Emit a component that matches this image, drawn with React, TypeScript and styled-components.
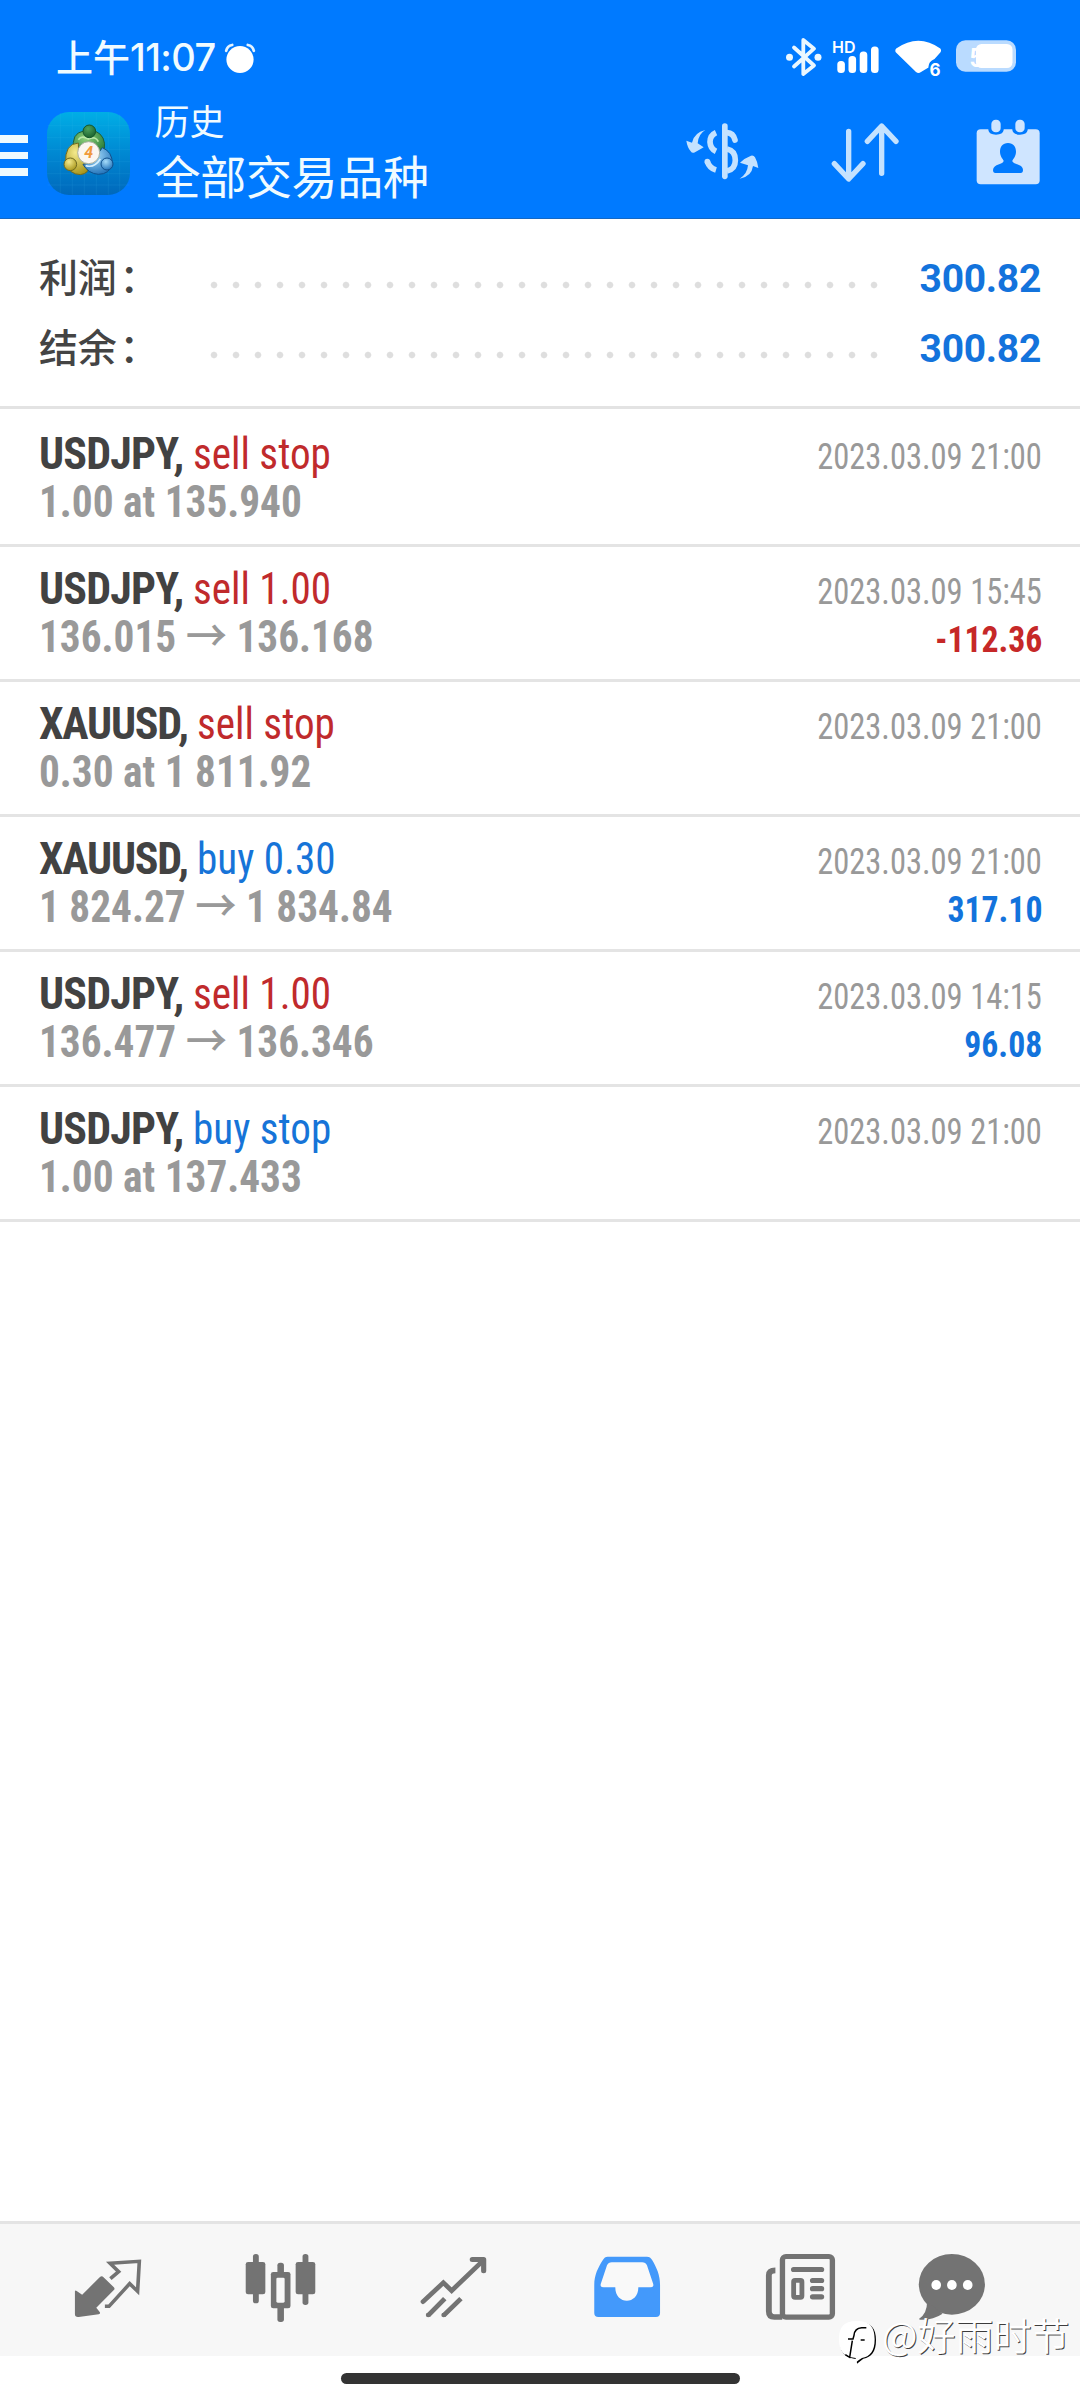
import React from 'react';
import styled, { createGlobalStyle } from 'styled-components';

const BLUE = '#007aff';
const CJK = "'Noto Sans CJK SC', sans-serif";

const GlobalStyle = createGlobalStyle`
  body { margin: 0; background: #fff; }
  svg { display: block; flex: none; }
`;

const Screen = styled.div`
  position: relative;
  width: 1080px;
  height: 2400px;
  display: flex;
  flex-direction: column;
  overflow: hidden;
  background: #fff;
  font-family: Roboto, ${CJK};
`;

/* ---------- header ---------- */

const Header = styled.header`
  height: 218px;
  background: ${BLUE};
  border-bottom: 1px solid #1468c4;
  color: #f0fbff;
`;

const StatusBar = styled.div`
  display: flex;
  align-items: flex-start;
  justify-content: space-between;
  height: 60px;
  padding: 34px 64px 0 56px;
`;

const StatusGroup = styled.div`
  display: flex;
  align-items: flex-start;
`;

const Clock = styled.span`
  font: 450 37px/46px ${CJK};
  margin-top: -1px;
  display: flex;
`;

const ClockDigits = styled.span`
  font: 500 38px/46px Inter, sans-serif;
  letter-spacing: -0.6px;
  margin-top: 1px;
`;

const StatusText = styled.text<{ $size: number; $weight: number }>`
  font-family: Inter, sans-serif;
  font-size: ${p => p.$size}px;
  font-weight: ${p => p.$weight};
  fill: #fff;
`;

const Alarm = styled.svg`
  width: 34px;
  height: 34px;
  margin: 8px 0 0 7px;
`;

const Toolbar = styled.div`
  display: flex;
  align-items: flex-start;
  height: 124px;
  padding-right: 32px;
`;

const Menu = styled.div`
  display: flex;
  flex-direction: column;
  gap: 9px;
  margin: 41px 19px 0 0;
`;

const MenuBar = styled.span`
  width: 27.5px;
  height: 7.5px;
  background: #eefaff;
`;

const AppTile = styled.svg`
  width: 83px;
  height: 83px;
  margin-top: 18px;
`;

const TileDigit = styled.text`
  font: italic 700 48px Roboto, sans-serif;
  text-anchor: middle;
  fill: #f09a3c;
`;

const Titles = styled.div`
  flex: 1;
  padding-left: 25px;
  font-family: ${CJK};
`;

const Caption = styled.div`
  font-size: 35px;
  line-height: 52px;
  height: 50px;
  font-weight: 400;
`;

const Title = styled.div`
  font-size: 46px;
  line-height: 60px;
  font-weight: 400;
  letter-spacing: -0.3px;
`;

const Actions = styled.div`
  display: flex;
  margin-top: 17px;
`;

const Action = styled.svg<{ $gap?: number }>`
  height: 80px;
  margin-left: ${p => p.$gap || 0}px;
  color: #c4e2ff;
`;

/* ---------- summary ---------- */

const Summary = styled.section`
  height: 166px;
  padding: 21px 39px 0;
  border-bottom: 3px solid #e3e3e3;
`;

const SummaryRow = styled.div`
  display: grid;
  grid-template-columns: 163.5px 682px 1fr;
  align-items: baseline;
  height: 70px;
`;

const Label = styled.span`
  font: 500 39px/70px ${CJK};
  letter-spacing: -0.3px;
  color: #444;
`;

const Colon = styled.span`
  margin-left: 3px;
`;

const Leader = styled.span`
  align-self: start;
  height: 8px;
  margin-top: 41px;
  background: radial-gradient(circle at center, #dedede 2.7px, rgba(222, 222, 222, 0) 3.8px) 0 0 / 22px 8px repeat-x;
`;

const Total = styled.span`
  font-size: 39px;
  line-height: 46px;
  font-weight: 700;
  letter-spacing: -0.3px;
  text-align: right;
  color: #1373dc;
`;

/* ---------- deals ---------- */

const DealList = styled.main`
  flex: 1;
  padding-top: 3px;
`;

const Deal = styled.article`
  height: 114px;
  padding: 18px 38px 0 39px;
  border-bottom: 3px solid #e4e4e4;
  font-stretch: 75%;
`;

const Line = styled.div`
  display: flex;
  justify-content: space-between;
  align-items: baseline;
  height: 48px;
  line-height: 48px;
  font-size: 44px;
  white-space: pre;
`;

const Symbol = styled.span<{ $tracking: number }>`
  font-weight: 700;
  letter-spacing: ${p => p.$tracking}px;
  color: #424242;
`;

const Side = styled.span<{ $buy: boolean }>`
  display: inline-block;
  font-weight: 430;
  transform: scaleX(0.935);
  transform-origin: left;
  color: ${p => (p.$buy ? '#1674d8' : '#c02a2c')};
`;

const Price = styled.span`
  font-weight: 700;
  transform: scaleX(0.938);
  transform-origin: left;
  color: #999;
`;

const Arrow = styled.span`
  font-weight: 500;
`;

const Time = styled.span`
  font-size: 36px;
  line-height: 40px;
  transform: scaleX(0.903);
  transform-origin: right;
  color: #999;
`;

const Profit = styled.span<{ $loss: boolean }>`
  font-size: 36px;
  line-height: 40px;
  font-weight: 700;
  transform: scaleX(0.937);
  transform-origin: right;
  color: ${p => (p.$loss ? '#c62828' : '#1373dc')};
`;

/* ---------- bottom ---------- */

const TabBar = styled.nav`
  display: flex;
  align-items: center;
  height: 132px;
  padding-left: 21px;
  border-top: 3px solid #e4e4e4;
  background: #f7f7f7;
`;

const Tab = styled.div<{ $active?: boolean; $width?: number }>`
  display: flex;
  justify-content: center;
  width: ${p => p.$width || 173}px;
  color: ${p => (p.$active ? '#4399fb' : '#737373')};
`;

const HomeArea = styled.div`
  display: flex;
  justify-content: center;
  height: 27px;
  padding-top: 17px;
`;

const HomeBar = styled.div`
  width: 399px;
  height: 11px;
  border-radius: 6px;
  background: #333;
`;

const Watermark = styled.div`
  position: absolute;
  left: 838px;
  top: 2310px;
  display: flex;
  font: 350 38px/56px ${CJK};
  color: #fff;
  text-shadow: 1px 1px 0 rgba(0, 0, 0, 0.75);
  white-space: nowrap;
`;

const WatermarkText = styled.span`
  margin: -4px 0 0 4px;
`;

const AlarmIcon = () => (
  <Alarm viewBox="0 0 34 34">
    <circle cx="17" cy="17.5" r="13.6" fill="#fff" />
    <path d="M3.200 8.800Q4.200 4 9.200 3M30.800 8.800Q29.800 4 24.800 3" fill="none" stroke="#e4f3ff" strokeWidth="2.800" strokeLinecap="round" />
  </Alarm>
);

const StatusIcons = () => (
  <svg width="236" height="48" viewBox="780 34 236 48">
    <path d="M794 47.500L814 65.500L803.300 74V40L814 48.700L794 66.500" fill="none" stroke="#eaf7ff" strokeWidth="3.800" strokeLinejoin="round" strokeLinecap="round" />
    <circle cx="789.500" cy="57.200" r="3.500" fill="#eaf7ff" />
    <circle cx="818" cy="57.200" r="3.500" fill="#eaf7ff" />
    <StatusText x="832" y="52.700" $size={16} $weight={600}>HD</StatusText>
    <g fill="#fff">
      <rect x="837.300" y="61" width="7.600" height="12" rx="3.500" />
      <rect x="848.500" y="56" width="7.600" height="17" rx="3.500" />
      <rect x="859.700" y="51.500" width="7.600" height="21.500" rx="3.500" />
      <rect x="871" y="46.500" width="7.600" height="26.500" rx="3.500" />
      <path d="M896.200 48.500Q918.500 33 940.300 48.500Q941.800 50.500 940.300 52.500L934.500 59Q928 62 928.500 67.500L921 72Q918.500 73.800 916 72L896 52.500Q894.500 50.500 896.200 48.500Z" />
      <rect x="956" y="40.300" width="60" height="31.500" rx="9.500" fillOpacity="0.73" />
    </g>
    <StatusText x="929.500" y="75.500" $size={17} $weight={700}>6</StatusText>
    <StatusText x="969" y="66.500" $size={25} $weight={600}>5</StatusText>
    <rect x="976" y="44" width="36.500" height="24" rx="5.500" fill="#fff" />
  </svg>
);

const AppIcon = () => (
  <AppTile viewBox="18 21 249 249">
    <defs>
      <linearGradient id="tile" x1="0" y1="0" x2="0" y2="1">
        <stop offset="0" stopColor="#00aee6" />
        <stop offset="0.5" stopColor="#0088d2" />
        <stop offset="1" stopColor="#0068bb" />
      </linearGradient>
      <radialGradient id="green" cx="0.4" cy="0.3" r="0.8"><stop offset="0" stopColor="#8fd07c" /><stop offset="1" stopColor="#18702e" /></radialGradient>
      <radialGradient id="leaf" cx="0.4" cy="0.3" r="0.8"><stop offset="0" stopColor="#4fa35c" /><stop offset="1" stopColor="#145a2a" /></radialGradient>
      <radialGradient id="gold" cx="0.4" cy="0.3" r="0.8"><stop offset="0" stopColor="#f4ea8c" /><stop offset="1" stopColor="#a08d10" /></radialGradient>
      <radialGradient id="sky" cx="0.4" cy="0.3" r="0.8"><stop offset="0" stopColor="#a6dcfa" /><stop offset="1" stopColor="#1569b4" /></radialGradient>
    </defs>
    <rect x="18" y="21" width="249" height="249" rx="66" fill="url(#tile)" />
    <path d="M58 24V267M94 22V269M130 22V269M166 22V269M202 22V269M236 28V260M20 62H265M18 98H267M18 134H267M18 170H267M18 206H267M20 240H265" stroke="#4cc4f2" strokeOpacity="0.16" strokeWidth="2" />
    <g strokeWidth="3">
      <path d="M98 135Q90 84 128 78H162Q196 92 190 134Q182 160 160 150L144 118Q124 118 98 135Z" fill="url(#green)" stroke="#1c5f3c" />
      <path d="M112 104Q122 90 142 102Q164 92 172 110" fill="none" stroke="#b9e8a8" strokeWidth="5" />
      <path d="M74 176Q70 116 112 114Q108 150 146 176Q146 206 118 209Q86 208 74 176Z" fill="url(#gold)" stroke="#6f6a20" />
      <path d="M126 178Q150 180 184 128Q214 140 214 176Q206 208 172 208Q142 206 126 178Z" fill="url(#sky)" stroke="#11508c" />
      <path d="M134 182Q160 190 178 162" fill="none" stroke="#d4efff" strokeWidth="5" />
      <circle cx="145" cy="79" r="19" fill="url(#leaf)" stroke="#14572c" />
      <circle cx="88" cy="178" r="19" fill="url(#gold)" stroke="#6f6a20" />
      <circle cx="198" cy="177" r="18" fill="url(#sky)" stroke="#11508c" />
      <circle cx="143" cy="143" r="33" fill="#fbf6f0" stroke="#a9b0a0" />
    </g>
    <TileDigit x="143" y="160">4</TileDigit>
  </AppTile>
);

const CurrencyIcon = () => (
  <Action width="90" viewBox="0 3 270 240">
    <path d="M134.500 48V199" stroke="currentColor" strokeWidth="17" strokeLinecap="round" />
    <g fill="none" stroke="currentColor" strokeWidth="17">
      <path d="M108 68Q90 76 90 96Q91 116 108 124" />
      <path d="M82 154Q88 174 108 180" />
      <path d="M141 68Q160 69 165 90" strokeLinecap="round" />
      <path d="M141 117Q166 122 166 151Q166 178 141 183" />
    </g>
    <circle cx="82" cy="155" r="8.500" fill="currentColor" />
    <path d="M76 60Q55 72 53 100L71 112Q60 119 42 128Q36 130 32 124Q22 112 19 92L36 98Q42 68 76 60Z" fill="currentColor" />
    <path d="M179 206Q202 192 204 166L180 158Q194 144 213 137Q221 135 225 142Q233 156 235 174L219 168Q215 200 179 206Z" fill="currentColor" />
  </Action>
);

const SortIcon = () => (
  <Action width="80" $gap={55} viewBox="495 333 240 240">
    <path d="M566 394V536M523 491L566 537L609 491M665 520V380M622 424L665 378L708 424" fill="none" stroke="currentColor" strokeWidth="16" strokeLinecap="round" strokeLinejoin="round" />
  </Action>
);

const CalendarIcon = () => (
  <Action width="80" $gap={63} viewBox="924 333 240 240">
    <rect x="950" y="388" width="189" height="165" rx="12" fill="#cfe5ff" />
    <path d="M985 384V390Q987 404 1008 404Q1029 404 1031 390V384ZM1057 384V390Q1059 404 1080 404Q1101 404 1103 390V384Z" fill={BLUE} />
    <rect x="994" y="359" width="28" height="38" rx="13" fill="#cfe5ff" />
    <rect x="1066" y="359" width="28" height="38" rx="13" fill="#cfe5ff" />
    <path d="M1044 429C1060 429 1068 441 1068 455C1068 468 1060 476 1057 482C1057 494 1088 490 1089 510Q1089 519 1082 519H1006Q999 519 999 510C1000 490 1031 494 1031 482C1028 476 1020 468 1020 455C1020 441 1028 429 1044 429Z" fill={BLUE} />
  </Action>
);

const TabIcon = ({ x, children }: { x: number; children: React.ReactNode }) => (
  <svg width="80" height="80" viewBox={`${x} 150 232.300 240`} preserveAspectRatio="none">{children}</svg>
);

const QuotesIcon = () => (
  <TabIcon x={198.9}>
    <path d="M219 274Q220 270 224 273L240 284L291 232Q297 226 302 232L332 262Q336 266 332 270L281 323L291 336Q294 341 288 343L230 351Q219 352 219 343Z" fill="currentColor" />
    <path d="M322 236L346 215L321 190L406 184L401 274L378 251L318 319H306" fill="none" stroke="currentColor" strokeWidth="10.500" />
  </TabIcon>
);

const ChartIcon = () => (
  <TabIcon x={701.3}>
    <g fill="currentColor">
      <rect x="736" y="162" width="17" height="148" rx="8" />
      <rect x="715" y="186" width="57" height="97" rx="7" />
      <rect x="880" y="162" width="17" height="153" rx="8" />
      <rect x="860" y="186" width="57" height="97" rx="7" />
      <rect x="807" y="188" width="19" height="178" rx="8" />
      <rect x="788" y="216" width="57" height="109" rx="7" />
    </g>
    <rect x="804" y="233" width="24" height="75" rx="4" fill="#f7f7f7" />
  </TabIcon>
);

const TradeIcon = () => (
  <TabIcon x={1203.7}>
    <g fill="none" stroke="currentColor" strokeWidth="14">
      <path d="M1230 305L1289 248L1313 272L1402 184" strokeLinecap="round" />
      <path d="M1373 178.500H1406V212" strokeWidth="15" strokeLinecap="round" strokeLinejoin="round" />
      <path d="M1245 346L1293 296M1290 346L1340 296" />
    </g>
    <circle cx="1245" cy="345" r="7" fill="currentColor" />
    <circle cx="1290" cy="345" r="7" fill="currentColor" />
  </TabIcon>
);

const HistoryIcon = () => (
  <TabIcon x={137.9}>
    <path d="M198 170H312Q322 170 327 180C340 203 350 225 350 255V339Q350 351 338 351H171Q159 351 159 339V255C159 225 170 203 184 180Q189 170 198 170Z" fill="currentColor" />
    <path d="M210 187H298Q308 187 312 196L330 251Q333 262 322 262H287C287 316 220 316 220 262H186Q175 262 178 251L196 196Q200 187 210 187Z" fill="#f9f9f9" />
  </TabIcon>
);

const NewsIcon = () => (
  <TabIcon x={640.3}>
    <g fill="none" stroke="currentColor">
      <rect x="705.500" y="169.500" width="145" height="182" rx="10" strokeWidth="15.500" />
      <path d="M685 211Q666 211 666 226V334Q666 351 682 351H705" strokeWidth="17" />
      <rect x="738" y="241" width="24" height="51" rx="4" strokeWidth="14" />
      <path d="M738 208.500H819M793 241.500H819M793 266H819M793 290.500H819" strokeWidth="15.500" strokeLinecap="round" />
    </g>
  </TabIcon>
);

const ChatIcon = () => (
  <TabIcon x={1083.2}>
    <ellipse cx="1199" cy="253" rx="96" ry="91" fill="currentColor" />
    <path d="M1127 305Q1127 340 1104 356Q1103 359 1108 359Q1145 360 1172 341Z" fill="currentColor" />
    <g fill="#fff">
      <ellipse cx="1153.500" cy="255" rx="14" ry="15" />
      <ellipse cx="1199" cy="255" rx="14" ry="15" />
      <ellipse cx="1245" cy="255" rx="14" ry="15" />
    </g>
  </TabIcon>
);

const WatermarkLogo = () => (
  <svg width="40" height="56" viewBox="24 0 120 168">
    <path d="M83 36C124 36 138 56 138 90C138 126 124 142 100 146Q94 150 81 161L80 147C40 144 30 122 30 90C30 54 44 36 83 36Z" fill="#000" />
    <path d="M80 33C122 33 134 54 134 88C134 124 120 140 96 144Q88 148 79 156L77 144C38 141 27 120 27 88C27 52 40 33 80 33Z" fill="#fff" />
    <path d="M109 53H95Q74 54 72 76L69 87H54M92 90H104M67 92L59 142L46 134" fill="none" stroke="#000" strokeWidth="4.500" />
  </svg>
);

type DealData = { symbol: string; side: string; from: string; to?: string; time: string; profit?: string };

const deals: DealData[] = [
  { symbol: 'USDJPY', side: 'sell stop', from: '1.00 at 135.940', time: '2023.03.09 21:00' },
  { symbol: 'USDJPY', side: 'sell 1.00', from: '136.015', to: '136.168', time: '2023.03.09 15:45', profit: '-112.36' },
  { symbol: 'XAUUSD', side: 'sell stop', from: '0.30 at 1 811.92', time: '2023.03.09 21:00' },
  { symbol: 'XAUUSD', side: 'buy 0.30', from: '1 824.27', to: '1 834.84', time: '2023.03.09 21:00', profit: '317.10' },
  { symbol: 'USDJPY', side: 'sell 1.00', from: '136.477', to: '136.346', time: '2023.03.09 14:15', profit: '96.08' },
  { symbol: 'USDJPY', side: 'buy stop', from: '1.00 at 137.433', time: '2023.03.09 21:00' },
];

const tracking: Record<string, number> = { USDJPY: -0.8, XAUUSD: -1.25 };

const totals = [
  { label: '利润', value: '300.82' },
  { label: '结余', value: '300.82' },
];

const App = () => (
  <Screen>
    <GlobalStyle />
    <Header>
      <StatusBar>
        <StatusGroup>
          <Clock>上午<ClockDigits>11:07</ClockDigits></Clock>
          <AlarmIcon />
        </StatusGroup>
        <StatusIcons />
      </StatusBar>
      <Toolbar>
        <Menu><MenuBar /><MenuBar /><MenuBar /></Menu>
        <AppIcon />
        <Titles>
          <Caption>历史</Caption>
          <Title>全部交易品种</Title>
        </Titles>
        <Actions>
          <CurrencyIcon />
          <SortIcon />
          <CalendarIcon />
        </Actions>
      </Toolbar>
    </Header>
    <Summary>
      {totals.map(t => (
        <SummaryRow key={t.label}>
          <Label>{t.label}<Colon>：</Colon></Label>
          <Leader />
          <Total>{t.value}</Total>
        </SummaryRow>
      ))}
    </Summary>
    <DealList>
      {deals.map((d, i) => (
        <Deal key={i}>
          <Line>
            <span>
              <Symbol $tracking={tracking[d.symbol]}>{d.symbol}, </Symbol>
              <Side $buy={d.side.startsWith('buy')}>{d.side}</Side>
            </span>
            <Time>{d.time}</Time>
          </Line>
          <Line>
            <Price>{d.from}{d.to && <> <Arrow>→</Arrow> {d.to}</>}</Price>
            {d.profit && <Profit $loss={d.profit.startsWith('-')}>{d.profit}</Profit>}
          </Line>
        </Deal>
      ))}
    </DealList>
    <TabBar>
      <Tab><QuotesIcon /></Tab>
      <Tab><ChartIcon /></Tab>
      <Tab><TradeIcon /></Tab>
      <Tab $active><HistoryIcon /></Tab>
      <Tab><NewsIcon /></Tab>
      <Tab $width={132}><ChatIcon /></Tab>
    </TabBar>
    <HomeArea><HomeBar /></HomeArea>
    <Watermark><WatermarkLogo /><WatermarkText>@好雨时节</WatermarkText></Watermark>
  </Screen>
);

export default App;
